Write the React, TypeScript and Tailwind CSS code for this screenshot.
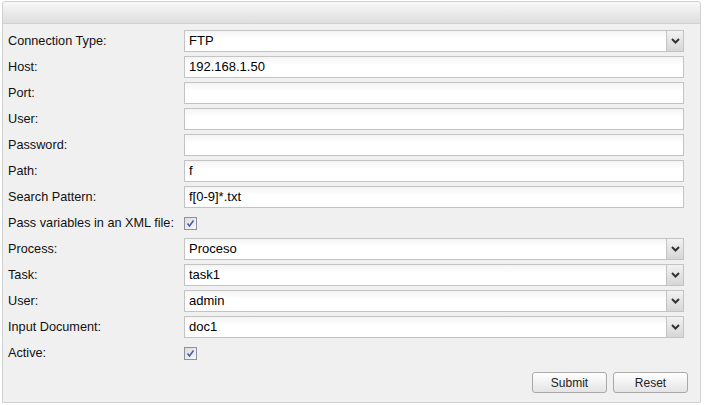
import React from "react";

const font = { fontFamily: '"Liberation Sans", Tahoma, Arial, sans-serif' };

function Chevron() {
  return (
    <svg width="9" height="6" viewBox="0 0 9 6">
      <path d="M1 1 L4.5 4.5 L8 1" fill="none" stroke="#333" strokeWidth="2" />
    </svg>
  );
}

function TextField({ value }: { value?: string }) {
  return (
    <div className="flex h-[22px] w-[500px] items-center border border-[#c3c3c3] bg-gradient-to-b from-[#f4f4f4] to-white to-[40%] px-[4px] text-[13px] text-black">
      {value}
    </div>
  );
}

function SelectField({ value }: { value: string }) {
  return (
    <div className="flex h-[22px] w-[500px] items-stretch border border-[#c3c3c3] bg-gradient-to-b from-[#f4f4f4] to-white to-[40%] text-[13px] text-black">
      <div className="flex flex-1 items-center px-[4px]">{value}</div>
      <div className="flex w-[17px] items-center justify-center border-l border-[#c3c3c3] bg-gradient-to-b from-[#f2f2f2] to-[#d6d6d6]">
        <Chevron />
      </div>
    </div>
  );
}

function Check() {
  return (
    <div className="flex h-[13px] w-[13px] items-center justify-center border border-[#8f8f9f] bg-gradient-to-br from-[#dcdcdc] to-[#f8f8f8]">
      <svg width="9" height="9" viewBox="0 0 9 9">
        <path d="M1.5 4.5 L3.5 7 L7.5 1.5" fill="none" stroke="#4a5fa8" strokeWidth="1.6" />
      </svg>
    </div>
  );
}

function Row({ label, children }: { label: string; children: React.ReactNode }) {
  return (
    <div className="flex h-[22px] items-center">
      <div className="w-[176px] pt-[2px] text-[12.7px] text-[#111]">{label}</div>
      {children}
    </div>
  );
}

export default function App() {
  return (
    <div className="h-[405px] w-[705px] bg-white pl-[2px] pt-[1px]" style={font}>
      <div className="flex h-[402px] w-[699px] flex-col rounded-t-[3px] border border-[#d0d0d0] bg-[#f0f0f0]">
        <div className="h-[22px] rounded-t-[3px] border-b border-[#d2d2d2] bg-gradient-to-b from-[#f8f8f8] to-[#dedede]" />
        <div className="flex flex-col gap-[4px] pl-[5px] pt-[6px]">
          <Row label="Connection Type:">
            <SelectField value="FTP" />
          </Row>
          <Row label="Host:">
            <TextField value="192.168.1.50" />
          </Row>
          <Row label="Port:">
            <TextField />
          </Row>
          <Row label="User:">
            <TextField />
          </Row>
          <Row label="Password:">
            <TextField />
          </Row>
          <Row label="Path:">
            <TextField value="f" />
          </Row>
          <Row label="Search Pattern:">
            <TextField value="f[0-9]*.txt" />
          </Row>
          <Row label="Pass variables in an XML file:">
            <Check />
          </Row>
          <Row label="Process:">
            <SelectField value="Proceso" />
          </Row>
          <Row label="Task:">
            <SelectField value="task1" />
          </Row>
          <Row label="User:">
            <SelectField value="admin" />
          </Row>
          <Row label="Input Document:">
            <SelectField value="doc1" />
          </Row>
          <Row label="Active:">
            <Check />
          </Row>
        </div>
        <div className="mt-[8px] flex justify-end gap-[6px] pr-[12px]">
          <button className="h-[21px] w-[75px] rounded-[3px] border border-[#a9a9a9] bg-gradient-to-b from-white to-[#e4e4e4] text-[12px] text-[#222]">
            Submit
          </button>
          <button className="h-[21px] w-[75px] rounded-[3px] border border-[#a9a9a9] bg-gradient-to-b from-white to-[#e4e4e4] text-[12px] text-[#222]">
            Reset
          </button>
        </div>
      </div>
    </div>
  );
}
